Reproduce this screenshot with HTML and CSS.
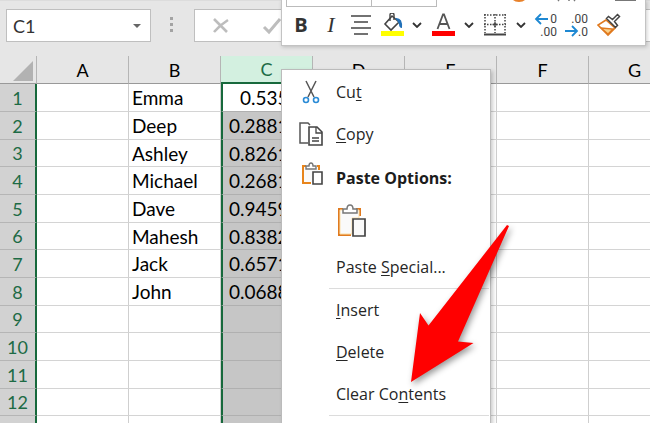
FILE: index.html
```html
<!DOCTYPE html>
<html lang="en">
<head>
<meta charset="utf-8">
<title>Spreadsheet</title>
<link rel="stylesheet" href="styles.css">
</head>
<body>
<div class="app">
  <header class="formula-bar">
    <div class="name-box">
      <input class="name-input" type="text" value="C1" aria-label="Name box">
      <svg class="name-caret" viewBox="0 0 8 4"><path d="M0 0h8L4 4z" fill="#666"/></svg>
    </div>
    <svg class="grip" viewBox="0 0 4 16"><path d="M0 0h3v3H0zM0 6h3v3H0zM0 12h3v3H0z" fill="#a3a3a3"/></svg>
    <div class="formula-box">
      <button class="bar-btn" aria-label="Cancel"><svg width="18" height="18" viewBox="0 0 18 18"><path d="M2 2q6 6 13 13M16 3Q8 8 2 15" fill="none" stroke="#bdbdbd" stroke-width="2.6"/></svg></button>
      <button class="bar-btn" aria-label="Enter"><svg width="20" height="18" viewBox="0 0 20 18"><path d="M2 10l5 5L18 2" fill="none" stroke="#bdbdbd" stroke-width="3"/></svg></button>
    </div>
  </header>

  <table class="sheet">
    <colgroup><col class="col-num"><col><col><col><col><col><col><col></colgroup>
    <thead>
      <tr><th class="corner"><svg width="20" height="20" viewBox="0 0 20 20"><path d="M20 0v20H0z" fill="#b2b2b2"/></svg></th><th>A</th><th>B</th><th class="picked">C</th><th>D</th><th>E</th><th>F</th><th>G</th></tr>
    </thead>
    <tbody>
      <tr><th>1</th><td></td><td>Emma</td><td class="sel active">0.53512</td><td></td><td></td><td></td><td></td></tr>
      <tr><th>2</th><td></td><td>Deep</td><td class="sel">0.288134</td><td></td><td></td><td></td><td></td></tr>
      <tr><th>3</th><td></td><td>Ashley</td><td class="sel">0.826134</td><td></td><td></td><td></td><td></td></tr>
      <tr><th>4</th><td></td><td>Michael</td><td class="sel">0.268134</td><td></td><td></td><td></td><td></td></tr>
      <tr><th>5</th><td></td><td>Dave</td><td class="sel">0.945934</td><td></td><td></td><td></td><td></td></tr>
      <tr><th>6</th><td></td><td>Mahesh</td><td class="sel">0.838234</td><td></td><td></td><td></td><td></td></tr>
      <tr><th>7</th><td></td><td>Jack</td><td class="sel">0.657134</td><td></td><td></td><td></td><td></td></tr>
      <tr><th>8</th><td></td><td>John</td><td class="sel">0.068834</td><td></td><td></td><td></td><td></td></tr>
      <tr><th>9</th><td></td><td></td><td class="sel"></td><td></td><td></td><td></td><td></td></tr>
      <tr><th>10</th><td></td><td></td><td class="sel"></td><td></td><td></td><td></td><td></td></tr>
      <tr><th>11</th><td></td><td></td><td class="sel"></td><td></td><td></td><td></td><td></td></tr>
      <tr><th>12</th><td></td><td></td><td class="sel"></td><td></td><td></td><td></td><td></td></tr>
      <tr><th></th><td></td><td></td><td class="sel"></td><td></td><td></td><td></td><td></td></tr>
    </tbody>
  </table>

  <div class="mini-bar">
    <div class="mini-top">
      <span class="combo combo-font"></span><span class="combo combo-size"></span>
      <svg class="mini-clip" width="132" height="8" viewBox="0 0 132 8"><path d="M9 0h12q-2 2-6 2t-6-2z" fill="#e8812a"/><path d="M55 0l-1 1M65 0v1M70 0l1 1" stroke="#777" stroke-width="1.5"/><path d="M111 0h21" stroke="#777" stroke-width="2"/></svg>
    </div>
    <div class="mini-row">
      <button class="tool" aria-label="Bold"><span class="bold">B</span></button>
      <button class="tool" aria-label="Italic"><span class="italic">I</span></button>
      <button class="tool" aria-label="Center"><svg width="20" height="22" viewBox="0 0 20 22"><path d="M0 2h20M3 8h14M0 14h20M3 20h14" stroke="#444" stroke-width="1.6"/></svg></button>
      <button class="tool fill" aria-label="Fill color"><svg width="24" height="24" viewBox="0 0 24 24"><path d="M1 18h23v5H1z" fill="#ff0"/><path d="M12 3l7 6-8 8-6-6z" fill="#fff" stroke="#444" stroke-width="1.6"/><path d="M10 8V2q0-2 2-2t2 2v5" fill="none" stroke="#444" stroke-width="1.4"/><path d="M15 5q8-1 7 10-3 0-3-4-1-3-4-6z" fill="#2170b8"/></svg></button>
      <button class="tool caret" aria-label="Fill color options"><svg width="10" height="6" viewBox="0 0 10 6"><path d="M1 1l4 4 4-4" fill="none" stroke="#333" stroke-width="1.8"/></svg></button>
      <button class="tool wide" aria-label="Font color"><svg width="24" height="24" viewBox="0 0 24 24"><path d="M1 18h23v5H1z" fill="#f00"/><path d="M6.500 16L12 1.500h1L18.500 16M8.500 11h8" fill="none" stroke="#555" stroke-width="1.8"/></svg></button>
      <button class="tool caret" aria-label="Font color options"><svg width="10" height="6" viewBox="0 0 10 6"><path d="M1 1l4 4 4-4" fill="none" stroke="#333" stroke-width="1.8"/></svg></button>
      <button class="tool wide" aria-label="Borders"><svg width="24" height="24" viewBox="0 0 24 24"><path d="M1 2h22M1 11.500h22" stroke="#444" stroke-width="1.5" stroke-dasharray="1.5 1.500"/><path d="M2 1v19M12 1v19M22 1v19" stroke="#444" stroke-width="1.5" stroke-dasharray="1.5 1.500"/><path d="M9.500 11.500h5M12 9v5" stroke="#444" stroke-width="1.3"/><path d="M1 21.500h22" stroke="#444" stroke-width="2"/></svg></button>
      <button class="tool caret" aria-label="Border options"><svg width="10" height="6" viewBox="0 0 10 6"><path d="M1 1l4 4 4-4" fill="none" stroke="#333" stroke-width="1.8"/></svg></button>
      <button class="tool fill" aria-label="Increase decimal"><svg width="24" height="30" viewBox="0 0 24 30"><text class="dec" x="23" y="13" text-anchor="end">0</text><text class="dec" x="23" y="26" text-anchor="end">.00</text><path d="M14 9H2M7 4L2 9l5 5" fill="none" stroke="#1e88d2" stroke-width="1.8"/></svg></button>
      <button class="tool" aria-label="Decrease decimal"><svg width="24" height="30" viewBox="0 0 24 30"><text class="dec" x="23" y="13" text-anchor="end">.00</text><text class="dec" x="23" y="26" text-anchor="end">.0</text><path d="M0 21h12M7 16l5 5-5 5" fill="none" stroke="#1e88d2" stroke-width="1.8"/></svg></button>
      <button class="tool wide" aria-label="Format painter"><svg width="24" height="24" viewBox="0 0 24 24"><path d="M9 7L1 12l3 3 7 7 7-7z" fill="#fff" stroke="#e07a1f" stroke-width="1.6"/><path d="M4 15l12 1-5 5z" fill="#fbd28b" stroke="#e07a1f" stroke-width="1.3"/><path d="M9.500 5.500l9 9 2-2-3-4 5-5-2-2-5 5-4-3z" fill="#fff" stroke="#444" stroke-width="1.5"/></svg></button>
    </div>
  </div>

  <div class="menu" role="menu">
    <button class="item" role="menuitem"><svg class="icon" width="24" height="24" viewBox="0 0 24 24"><path d="M7 1l8 16M17 1L9 17" fill="none" stroke="#555" stroke-width="1.5"/><circle cx="7" cy="20" r="2.500" fill="none" stroke="#2b8bd6" stroke-width="1.6"/><circle cx="17" cy="20" r="2.500" fill="none" stroke="#2b8bd6" stroke-width="1.6"/></svg><span>Cu<u>t</u></span></button>
    <button class="item" role="menuitem"><svg class="icon" width="24" height="24" viewBox="0 0 24 24"><path d="M9 21H1V1h8l2 2" fill="none" stroke="#555" stroke-width="1.5"/><path d="M10 5h8l5 5v13H10z" fill="#fff" stroke="#444" stroke-width="1.6"/><path d="M17 5v6h6M13 16h7M13 19h7" fill="none" stroke="#444" stroke-width="1.300"/></svg><span><u>C</u>opy</span></button>
    <div class="item heading"><svg class="icon" width="24" height="32" viewBox="0 0 24 32"><path d="M7 4H4v17h8M18 4h2v4" fill="none" stroke="#e8851c" stroke-width="2"/><path d="M5 5h14v5h-6v10H5z" fill="#fafafa"/><path d="M7 7V4h3q0-3 2-3t2 3h3v3z" fill="#fff" stroke="#777" stroke-width="1.4"/><path d="M14 10h9v12h-9z" fill="#fff" stroke="#444" stroke-width="1.6"/></svg><span>Paste Options:</span></div>
    <button class="paste" role="menuitem" aria-label="Paste"><svg width="30" height="38" viewBox="0 0 30 38"><path d="M7 5H3v26h12M20 5h4v7" fill="none" stroke="#e07a1f" stroke-width="2"/><path d="M4 6h19v8h-7v16H4z" fill="#fafafa" stroke="#fbdfa9"/><path d="M7 9V5h4q0-4 3-4t3 4h4v4z" fill="#fff" stroke="#777" stroke-width="1.500"/><path d="M17 15h12v17H17z" fill="#fafafa" stroke="#444" stroke-width="1.700"/></svg></button>
    <button class="item" role="menuitem"><span class="indent">Paste <u>S</u>pecial...</span></button>
    <hr class="rule">
    <button class="item" role="menuitem"><span class="indent"><u>I</u>nsert</span></button>
    <button class="item" role="menuitem"><span class="indent"><u>D</u>elete</span></button>
    <button class="item" role="menuitem"><span class="indent">Clear Co<u>n</u>tents</span></button>
    <hr class="rule">
  </div>

  <svg class="pointer" width="110" height="170" viewBox="0 0 110 170"><path d="M6 162l9-69 8.500 12.500L102 5l2 1-51 115.500 15.500 1.500z" fill="#f00"/></svg>
</div>
</body>
</html>
```
FILE: styles.css
```css
* { box-sizing: border-box; }
body { margin: 0; font-family: Lato, "Liberation Sans", sans-serif; background: #e6e6e6; color: #000; }
button { border: 0; background: none; padding: 0; margin: 0; font: inherit; color: inherit; }
svg { display: block; flex: none; }
.app { position: relative; height: 100vh; overflow: hidden; }

.formula-bar { display: flex; padding: 8px 0 14px 6px; border-top: 1px solid #dcdcdc; height: 56px; }
.name-box { display: flex; align-items: center; width: 145px; height: 33px; background: #fff; border: 1px solid #bfbfbf; padding: 0 9px 0 6px; }
.name-input { flex: 1; min-width: 0; border: 0; padding: 0; outline: 0; font: 18px Lato, sans-serif; color: #333; background: none; }
.name-caret { width: 8px; height: 4px; }
.grip { width: 4px; height: 16px; margin: 8px 20px 0 19px; }
.formula-box { flex: 1; display: flex; align-items: center; gap: 32px; height: 33px; padding-left: 17px; background: #fff; border: 1px solid #bfbfbf; border-right: 0; }

.sheet { table-layout: fixed; width: 681px; border-collapse: separate; border-spacing: 0; font-size: 18px; line-height: 26px; }
.col-num { width: 37px; }
.sheet th { font-weight: 400; padding: 0; }
thead th { height: 28px; border-right: 1px solid #b5b5b5; border-bottom: 1px solid #999; padding-top: 1px; text-align: center; }
thead .corner { padding: 5px 3px 2px 13px; border-right: 1px solid #b5b5b5; }
thead .picked { background: #d3f0e0; color: #1d6b45; border-bottom: 2px solid #17693c; }
tbody tr { height: 28px; }
tbody tr:nth-child(3n) { height: 27px; line-height: 25px; }
tbody th { background: #d2d2d2; color: #1d6b45; border-right: 2px solid #17693c; border-bottom: 1px solid #b5b5b5; }
tbody td { background: #fff; border-right: 1px solid #cfcfcf; border-bottom: 1px solid #d4d4d4; padding: 0 0 0 3px; white-space: nowrap; overflow: hidden; font-size: 19px; }
.sheet .sel { background: #c6c6c6; border-left: 2px solid #17693c; border-bottom-color: #b0b0b0; padding-left: 6px; }
.sheet .active { background: #fff; padding-left: 17px; }

.mini-bar { position: absolute; left: 281px; top: 0; width: 365px; height: 46px; background: #fff; border: 1px solid #c3c3c3; border-top: 0; padding-left: 4px; box-shadow: 1px 1px 4px #0003; }
.mini-top { display: flex; height: 8px; }
.combo { height: 7px; border: 1px solid #bbb; border-top: 0; }
.combo-font { width: 86px; }
.combo-size { width: 65px; border-left: 0; margin-right: 67px; }
.mini-row { display: flex; height: 34px; }
.tool { display: flex; align-items: center; justify-content: center; width: 30px; flex: none; }
.tool.fill { width: 32px; }
.tool.wide { width: 34px; }
.tool.caret { width: 18px; }
.bold { font: bold 20px/24px "Open Sans", sans-serif; color: #333; }
.italic { font: italic 22px/24px "Liberation Serif", serif; color: #333; }
.dec { font: 12px Roboto, sans-serif; fill: #444; }

.menu { position: absolute; left: 281px; top: 69px; width: 210px; height: 360px; padding-top: 1px; background: #fff; border: 1px solid #bbb; box-shadow: 2px 2px 4px #0003; font: 16px "Open Sans", sans-serif; color: #262626; }
.item { display: flex; align-items: center; gap: 13px; width: 100%; height: 42px; padding-left: 17px; text-align: left; white-space: nowrap; }
.item u { text-underline-offset: 2px; }
.heading { height: 45px; font-weight: 700; color: #1c1c1c; }
.indent { padding-left: 37px; }
.paste { display: flex; align-items: center; height: 46px; padding-left: 54px; }
.rule { margin: 0 1px 0 47px; border: 0; border-top: 1px solid #dcdcdc; }
.pointer { position: absolute; left: 405px; top: 220px; filter: drop-shadow(2px 3px 3px #0006); pointer-events: none; }
```
